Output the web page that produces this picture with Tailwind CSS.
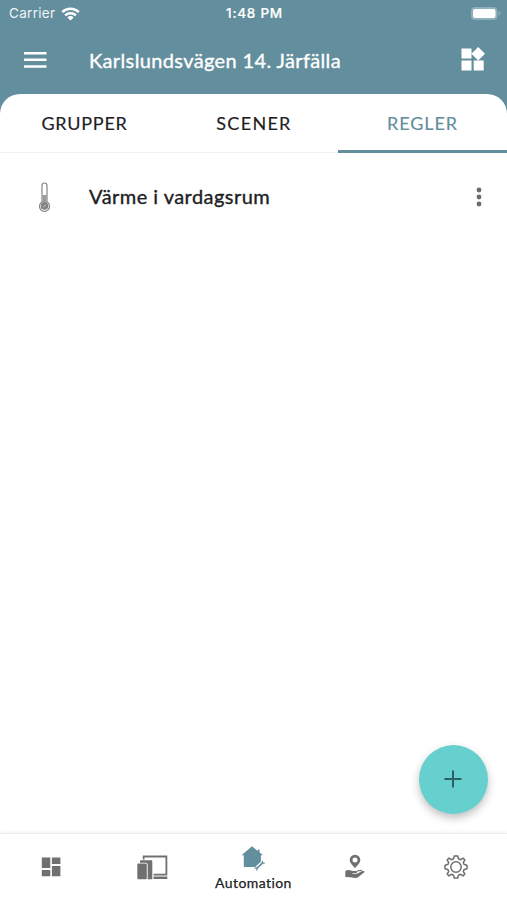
<!DOCTYPE html>
<html lang="sv">
<head>
    <meta charset="UTF-8">
    <meta name="viewport" content="width=device-width, initial-scale=1.0">
    <script src="https://cdn.jsdelivr.net/npm/@tailwindcss/browser@4"></script>
    <title>Automation</title>
</head>
<body class="bg-[#638e9d]">
    <div class="relative flex flex-col w-[507px] h-[900px] overflow-hidden font-[Lato,sans-serif] text-[#202022]">
        <!-- Status bar -->
        <div class="grid grid-cols-3 items-center h-[27px] pl-[9px] pr-[6px] text-white font-[Inter,sans-serif] text-[13.5px]">
            <div class="flex items-center gap-[6px]">
                <span class="tracking-[0.3px] text-white/90">Carrier</span>
                <svg class="w-[19px] h-[14px]" viewBox="0 0 19 14" fill="none" stroke="currentColor" stroke-width="2.5">
                    <path d="M1.2 5.1a12 12 0 0 1 16.6 0M4.1 8.3a8 8 0 0 1 10.8 0"/>
                    <path d="M9.5 13.6 6.4 10.5a4.6 4.6 0 0 1 6.2 0Z" fill="currentColor" stroke="none"/>
                </svg>
            </div>
            <div class="-ml-px text-center font-medium tracking-[0.75px] [-webkit-text-stroke:0.2px]">1:48 PM</div>
            <svg class="w-[31px] h-[15px] justify-self-end" viewBox="0 0 31 15">
                <rect x="1" y="1" width="26.5" height="13" rx="4" fill="#8fb0ba"/>
                <rect x="3" y="3" width="22.5" height="9" rx="2" fill="#fff"/>
                <path d="M28.7 5.2v4.4q1.7-.6 1.7-2.2t-1.7-2.2Z" fill="#8fb0ba"/>
            </svg>
        </div>

        <!-- App bar -->
        <div class="flex items-center h-[67px] pb-[2px] pl-6 pr-[22px] text-white">
            <svg class="w-[23px] h-[16px] shrink-0" viewBox="0 0 23 16" fill="currentColor">
                <path d="M0 0h22.500v2.500H0zM0 6.600h22.500v2.500H0zM0 13.200h22.500v2.500H0z"/>
            </svg>
            <h1 class="ml-[42px] flex-1 whitespace-nowrap text-[20px] tracking-[0.37px] [-webkit-text-stroke:0.35px]">Karlslundsvägen 14. Järfälla</h1>
            <svg class="w-[24px] h-[24px] mb-px" viewBox="0 0 24 24" fill="currentColor">
                <path d="M.5 1.500h10v10H.5zM.5 13.500h10v10H.5zM12.700 13.500h10v10h-10zM17.200 0l6.800 6.700-6.800 6.700-6.800-6.700z"/>
            </svg>
        </div>

        <!-- Content sheet -->
        <main class="flex flex-col flex-1 bg-white rounded-t-[20px] overflow-hidden">
            <div class="grid grid-cols-3 h-[59px] border-b border-[#f2f2f2] text-center text-[18px] leading-[58px] [-webkit-text-stroke:0.15px]">
                <div class="tracking-[0.75px]">GRUPPER</div>
                <div class="pl-px tracking-[1.3px]">SCENER</div>
                <div class="h-[59px] border-b-[3px] border-[#638e9d] text-[#638e9d] tracking-[0.9px]">REGLER</div>
            </div>
            <div class="flex items-center h-[88px] pl-[38px] pr-[24px]">
                <svg class="w-[13px] h-[30px]" viewBox="0 0 13 30" fill="none" stroke="#858585">
                    <path d="M4 20V3.500a2.500 2.500 0 0 1 5 0V20a5 5 0 1 1-5 0Z" fill="#fff" stroke-width="1.200"/>
                    <path d="M4.500 13h4v9h-4z" fill="#999" stroke="none"/>
                    <circle cx="6.500" cy="24" r="3.800" fill="#848484" stroke="none"/>
                    <path d="m5 25 3-2" stroke="#ccc" stroke-width=".8"/>
                </svg>
                <div class="ml-[38px] pb-[3px] flex-1 text-[20px] tracking-[0.45px] [-webkit-text-stroke:0.35px]">Värme i vardagsrum</div>
                <svg class="w-[8px] h-[20px]" viewBox="0 0 8 20" fill="#6c6c6c">
                    <circle cx="4" cy="3" r="2.400"/>
                    <circle cx="4" cy="10" r="2.400"/>
                    <circle cx="4" cy="17" r="2.400"/>
                </svg>
            </div>
        </main>

        <!-- Bottom navigation -->
        <nav class="grid grid-cols-5 items-center h-[67px] bg-white border-t border-[#eeeeee] shadow-[0_-1px_3px_rgba(0,0,0,0.06)] text-[#707070]">
            <div class="flex justify-center">
                <svg class="w-[20px] h-[20px]" viewBox="0 0 20 20" fill="currentColor">
                    <path d="M.8 .6h8.500v10.400H.8zM10.900 .6h8.500v6.300h-8.500zM.8 13h8.500v6.300H.8zM10.900 8.900h8.500v10.400h-8.500z"/>
                </svg>
            </div>
            <div class="flex justify-center">
                <svg class="w-[31px] h-[25px]" viewBox="0 0 31 25" fill="currentColor">
                    <path d="M5.800 4.500V.5h24.500v20H16.500v-1.800h12V2.500H7.500v2zM16.500 21.600h13.800v2.500H16.500z"/>
                    <path d="M3 7.800V6.200q0-1 1-1h10.300q1 0 1 1v18h-4.600V9.800q0-2-2-2z"/>
                    <rect x=".3" y="8.600" width="9.500" height="15.700" rx="1.200"/>
                </svg>
            </div>
            <div class="flex flex-col items-center h-full pt-[12px]">
                <svg class="w-[24px] h-[27px]" viewBox="0 0 24 27">
                    <path d="M11 .3.5 9.200h2.300v11.800h12.200l4.900-4.800V9.200h2.100L18.500 6.300V3.600h-1.700v1.300z" fill="#638e9d"/>
                    <path d="m15.700 21.700 5.600-5" stroke="#fff" stroke-width="3.400"/>
                    <path d="m15.700 22.300 6-5.500" stroke="#638e9d" stroke-width="1.700"/>
                    <path d="M21.400 14.900v2.200h2.300M15.900 24.500v-2.400h-2.400" fill="none" stroke="#638e9d" stroke-width="1.300"/>
                </svg>
                <span class="-mt-px text-[14px] leading-[22px] tracking-[0.42px] text-[#202022] [-webkit-text-stroke:0.25px]">Automation</span>
            </div>
            <div class="flex justify-center">
                <svg class="w-[20px] h-[26px]" viewBox="0 0 20 26" fill="currentColor">
                    <path d="M10 .7a5.300 5.300 0 0 0-5.300 5.300C4.700 9 8 11.500 10 14.300c2-2.800 5.300-5.300 5.300-8.300A5.300 5.300 0 0 0 10 .7Zm0 2.700a2.500 2.500 0 1 1 0 5 2.500 2.500 0 0 1 0-5Z" fill-rule="evenodd"/>
                    <path d="M.3 17c2.200-1.500 4.700-1.400 6.800 0h3.800c1.600 0 1.600 1.700.1 1.900l-3.500.2v.6h4.400l5.500-2.600c1.300-.6 2.800.1 1.900 1.100l-6.300 5q-1 .8-2.400.7l-5.500-.6-4.800-.2Z"/>
                    <path d="m12 17.200 2.500-1M14.500 17l2.500-1" stroke="currentColor" stroke-width="1.200"/>
                </svg>
            </div>
            <div class="flex justify-center">
                <svg class="w-[24px] h-[24px]" viewBox="0 0 24 24" fill="none" stroke="currentColor" stroke-width="1.500" stroke-linejoin="round">
                    <path d="m10.200 1-.6 2.800-2.200.9L5 3.100 3.100 5l1.600 2.400-.9 2.200-2.800.6v3.600l2.800.6.9 2.200L3.100 19 5 20.900l2.400-1.600 2.200.9.600 2.800h3.600l.6-2.800 2.200-.9 2.400 1.600 1.900-1.900-1.600-2.400.9-2.200 2.800-.6v-3.600l-2.800-.6-.9-2.200L20.900 5 19 3.100l-2.400 1.600-2.200-.9-.6-2.800Z"/>
                    <circle cx="12" cy="12" r="5.200"/>
                </svg>
            </div>
        </nav>

        <!-- Floating add button -->
        <button class="absolute right-[19.5px] bottom-[86.5px] flex items-center justify-center w-[69px] h-[69px] rounded-full bg-[#65d0ce] shadow-[0_4px_9px_rgba(0,0,0,0.25)]">
            <svg class="w-[18px] h-[18px]" viewBox="0 0 18 18" stroke="#2e5f65" stroke-width="2">
                <path d="M9 .5v17M.5 9h17"/>
            </svg>
        </button>
    </div>
</body>
</html>
